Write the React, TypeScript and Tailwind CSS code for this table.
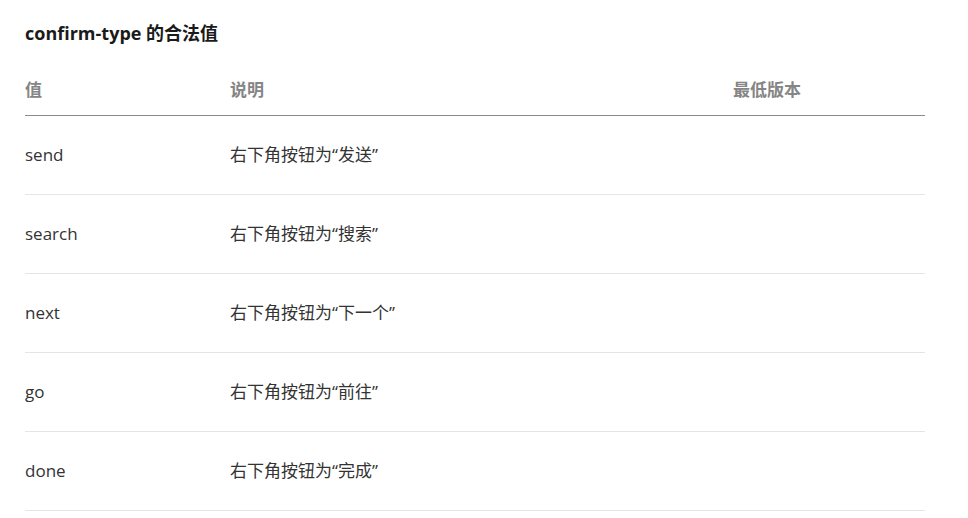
const rows = [
  { value: 'send', desc: '右下角按钮为“发送”' },
  { value: 'search', desc: '右下角按钮为“搜索”' },
  { value: 'next', desc: '右下角按钮为“下一个”' },
  { value: 'go', desc: '右下角按钮为“前往”' },
  { value: 'done', desc: '右下角按钮为“完成”' },
];

const App = () => {
  return (
    <div
      className="min-h-screen bg-white px-[25px] pt-[21px] text-[#333]"
      style={{ fontFamily: '"Open Sans", "Noto Sans CJK SC", sans-serif' }}
    >
      {/* Title */}
      <h3 className="text-[18px] font-bold leading-6 text-[#1a1a1a]">confirm-type 的合法值</h3>

      <table className="mt-5 w-[900px] table-fixed border-collapse text-left">
        <colgroup>
          <col className="w-[205px]" />
          <col className="w-[503px]" />
          <col className="w-[192px]" />
        </colgroup>
        <thead>
          <tr className="h-[50px] border-b border-[#8a8a8a]">
            <th className="p-0 text-[17px] font-bold text-[#858585]">值</th>
            <th className="p-0 text-[17px] font-bold text-[#858585]">说明</th>
            <th className="p-0 text-[17px] font-bold text-[#858585]">最低版本</th>
          </tr>
        </thead>
        <tbody>
          {rows.map((row) => (
            <tr key={row.value} className="h-[79px] border-b border-[#e5e5e5]">
              <td className="p-0 text-[17px]">{row.value}</td>
              <td className="p-0 text-[17px]">{row.desc}</td>
              <td className="p-0 text-[17px]"></td>
            </tr>
          ))}
        </tbody>
      </table>
    </div>
  );
};

export default App;
